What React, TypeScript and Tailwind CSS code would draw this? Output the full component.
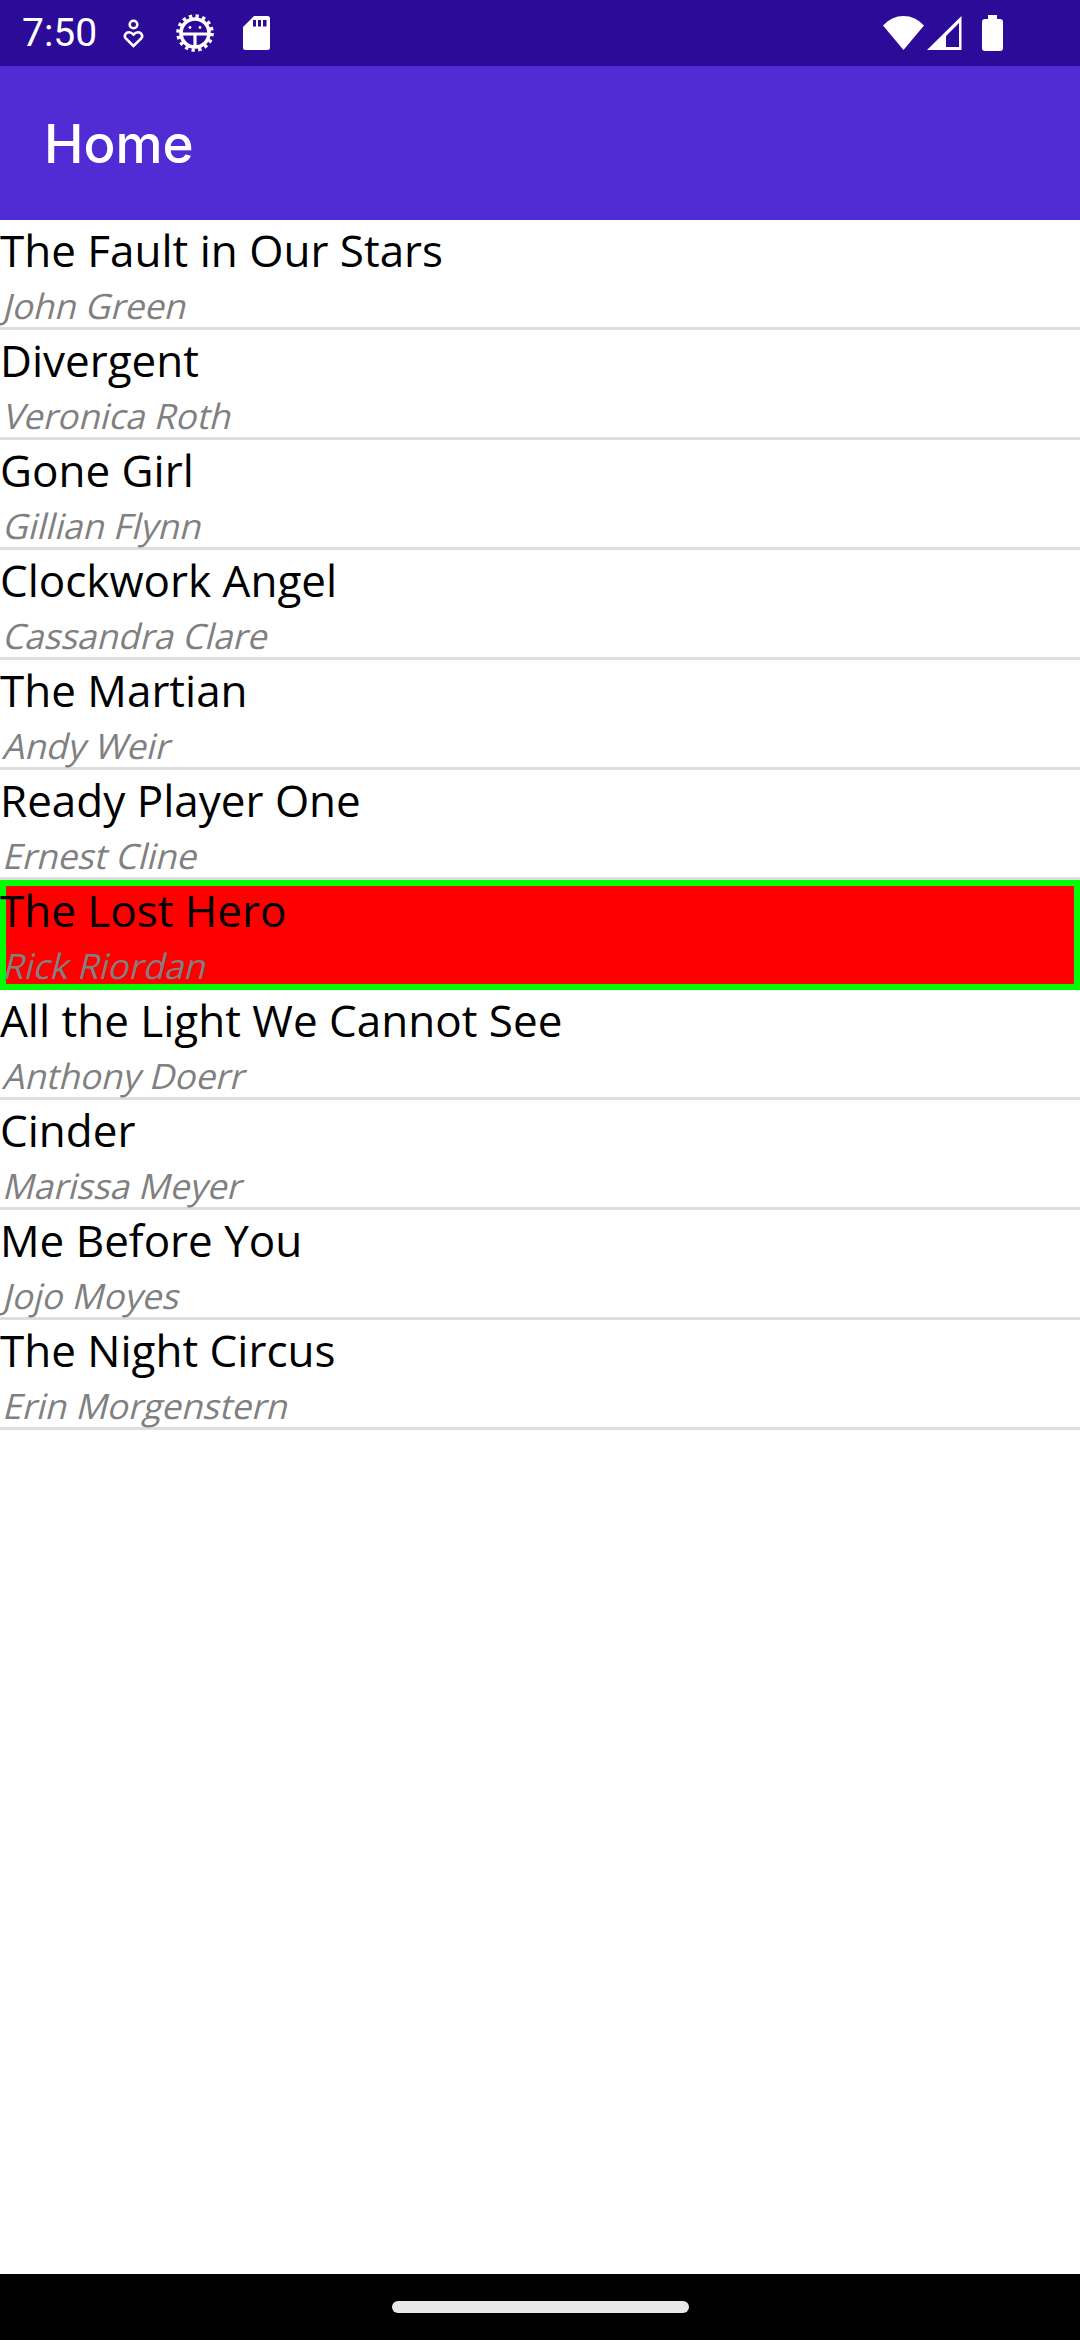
import React from "react";

const books = [
  { title: "The Fault in Our Stars", author: "John Green" },
  { title: "Divergent", author: "Veronica Roth" },
  { title: "Gone Girl", author: "Gillian Flynn" },
  { title: "Clockwork Angel", author: "Cassandra Clare" },
  { title: "The Martian", author: "Andy Weir" },
  { title: "Ready Player One", author: "Ernest Cline" },
  { title: "The Lost Hero", author: "Rick Riordan", selected: true },
  { title: "All the Light We Cannot See", author: "Anthony Doerr" },
  { title: "Cinder", author: "Marissa Meyer" },
  { title: "Me Before You", author: "Jojo Moyes" },
  { title: "The Night Circus", author: "Erin Morgenstern" },
];

function StatusBar() {
  return (
    <div className="h-[66px] bg-[#2b0b98] flex items-center justify-between pl-[22px] pr-[77px] text-white">
      <div className="flex items-center">
        <span className="font-['Roboto',sans-serif] text-[39px] leading-none w-[101px]">7:50</span>
        <svg width="21" height="29" viewBox="0 0 21 29" fill="none" stroke="white" strokeWidth="2.6">
          <circle cx="10.5" cy="5.5" r="3.8" />
          <path d="M10.5 27 L2.8 19.5 Q0.5 16.5 3.5 14 Q7 12 10.5 15.5 Q14 12 17.5 14 Q20.5 16.5 18.2 19.5 Z" />
        </svg>
        <svg className="ml-[32px]" width="38" height="38" viewBox="0 0 38 38" fill="none" stroke="white">
          <circle cx="19" cy="19" r="14" strokeWidth="3.6" />
          <circle cx="19" cy="19" r="17" strokeWidth="3.6" strokeDasharray="3.3 3.38" />
          <path d="M4 20 H34 M19 20 V34" strokeWidth="3.2" />
          <circle cx="14" cy="13.5" r="1.4" fill="white" stroke="none" />
          <circle cx="24" cy="13.5" r="1.4" fill="white" stroke="none" />
        </svg>
        <svg className="ml-[29px]" width="27" height="34" viewBox="0 0 27 34">
          <path
            fillRule="evenodd"
            fill="white"
            d="M11 0 H24.5 Q27 0 27 2.5 V31.5 Q27 34 24.5 34 H2.5 Q0 34 0 31.5 V11 Z M10 4 V10.5 H13 V4 Z M15 4 V10.5 H18 V4 Z M20 4 V10.5 H23.5 V4 Z"
          />
        </svg>
      </div>
      <div className="flex items-center">
        <svg width="41" height="34" viewBox="0 0 41 34">
          <path fill="white" d="M20.5 34 L0 9.5 Q8.5 0 20.5 0 Q32.5 0 41 9.5 Z" />
        </svg>
        <svg className="ml-[3px]" width="35" height="34" viewBox="0 0 35 34">
          <path
            fillRule="evenodd"
            fill="white"
            d="M34.5 0 V34 H0 Z M32 7 L19 20 V31 H32 Z"
          />
        </svg>
        <svg className="ml-[20px]" width="21" height="36" viewBox="0 0 21 36">
          <path fill="white" d="M6 0 H15 V4 H18 Q21 4 21 7 V33 Q21 36 18 36 H3 Q0 36 0 33 V7 Q0 4 3 4 H6 Z" />
        </svg>
      </div>
    </div>
  );
}

function BookRow({ title, author, selected }: { title: string; author: string; selected?: boolean }) {
  return (
    <div
      className={
        selected
          ? "h-[110px] bg-[#ff0000] shadow-[inset_0_0_0_6px_#00ff00]"
          : "h-[110px] border-b-[3px] border-[#dedede]"
      }
    >
      <div className="text-[44px] leading-[60px] text-black">{title}</div>
      {/* the device slants the regular face rather than using a real italic */}
      <div className="text-[35px] leading-[50px] pt-[1px] pl-[2px] text-[#808080] origin-[0_38px] -skew-x-[14deg]">
        {author}
      </div>
    </div>
  );
}

export default function App() {
  return (
    <div className="h-[2340px] w-[1080px] flex flex-col bg-white overflow-hidden font-['Open_Sans',sans-serif]">
      <StatusBar />
      <header className="h-[154px] bg-[#512bd4] flex items-center pl-[44px] pt-[3px] text-white text-[53px] font-medium font-['Inter',sans-serif]">
        Home
      </header>
      <main className="flex-1">
        {books.map((b) => (
          <BookRow key={b.title} title={b.title} author={b.author} selected={b.selected} />
        ))}
      </main>
      <div className="h-[66px] bg-black flex items-center justify-center">
        <div className="w-[297px] h-[12px] rounded-full bg-[#e8e8e8]" />
      </div>
    </div>
  );
}
